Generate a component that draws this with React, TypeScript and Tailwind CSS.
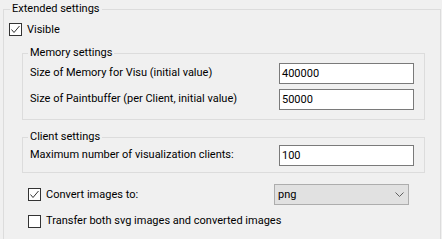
function CheckBox({ checked }: { checked: boolean }) {
  return (
    <span className="flex h-[13px] w-[13px] shrink-0 items-center justify-center border border-[#333333] bg-white">
      {checked && (
        <svg width="11" height="11" viewBox="0 0 11 11" fill="none">
          <path d="M1.5 5.5 L4 8.5 L9.5 2" stroke="#333333" strokeWidth="1" />
        </svg>
      )}
    </span>
  );
}

function NumberField({ value }: { value: string }) {
  return (
    <div className="flex h-[21px] w-[135px] items-center border border-[#7a7a7a] bg-white pl-[2px] leading-[16px]">
      {value}
    </div>
  );
}

export default function App() {
  return (
    <div className="h-[239px] w-[442px] overflow-hidden bg-[#f0f0f0] pl-[3px] pr-[1px] pt-[1px] font-['Roboto','Noto_Sans',sans-serif] text-[11px] text-black">
      <fieldset className="border border-[#dcdcdc] pb-4 pl-[5px] pr-[15px]">
        <legend className="ml-[1px] px-[2px] leading-[16px]">Extended settings</legend>

        <div className="mt-[6px] flex h-[13px] items-center gap-[5px]">
          <CheckBox checked />
          <span className="leading-[16px]">Visible</span>
        </div>

        <fieldset className="ml-[13px] mt-[9px] border border-[#dcdcdc] pb-[9px] pl-[7px] pr-[10px]">
          <legend className="-ml-[2px] px-[2px] leading-[16px]">Memory settings</legend>
          <div className="mt-[2px] flex items-center justify-between">
            <span>Size of Memory for Visu (initial value)</span>
            <NumberField value="400000" />
          </div>
          <div className="mt-[5px] flex items-center justify-between">
            <span>Size of Paintbuffer (per Client, initial value)</span>
            <NumberField value="50000" />
          </div>
        </fieldset>

        <fieldset className="ml-[13px] mt-[9px] border border-[#dcdcdc] pb-[6px] pl-[7px] pr-[10px]">
          <legend className="-ml-[2px] px-[2px] leading-[16px]">Client settings</legend>
          <div className="flex items-center justify-between">
            <span>Maximum number of visualization clients:</span>
            <NumberField value="100" />
          </div>
        </fieldset>

        <div className="ml-[19px] mr-[16px] mt-[11px] flex h-[21px] items-center">
          <CheckBox checked />
          <span className="ml-[5px] leading-[16px]">Convert images to:</span>
          <div className="ml-auto flex h-[21px] w-[135px] items-center justify-between border border-[#adadad] bg-[#e1e1e1] pl-[3px] pr-[4px] leading-[16px]">
            <span>png</span>
            <svg width="9" height="5" viewBox="0 0 9 5" fill="none">
              <path d="M0.5 0.5 L4.5 4.5 L8.5 0.5" stroke="#606060" strokeWidth="1" />
            </svg>
          </div>
        </div>

        <div className="ml-[19px] mt-[8px] flex items-center">
          <CheckBox checked={false} />
          <span className="ml-[5px] leading-[16px]">Transfer both svg images and converted images</span>
        </div>
      </fieldset>
    </div>
  );
}
